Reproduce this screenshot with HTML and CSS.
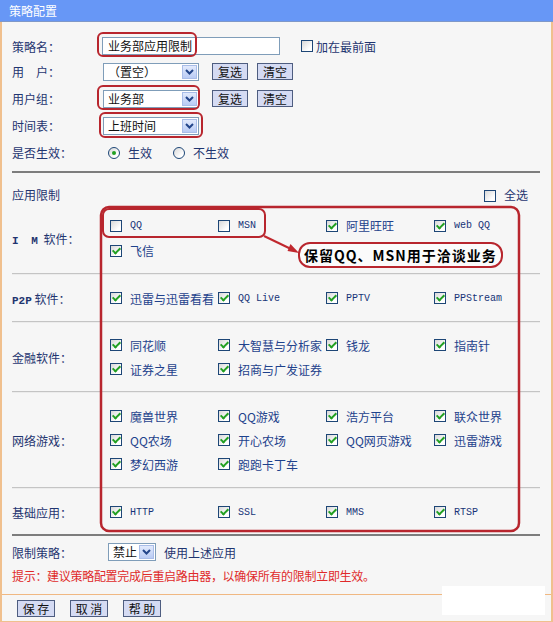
FILE: index.html
```html
<!DOCTYPE html>
<html lang="zh-CN">
<head>
<meta charset="utf-8">
<title>策略配置</title>
<link rel="stylesheet" href="styles.css">
</head>
<body>
<div class="page">
  <div class="titlebar">策略配置</div>
  <div class="panel">
    <div class="form">
      <div class="frow first">
        <span class="lbl">策略名：</span>
        <span class="tinput">业务部应用限制</span>
        <span class="cb front"></span><span class="ftxt">加在最前面</span>
      </div>
      <div class="frow">
        <span class="lbl">用　户：</span>
        <span class="sel"><span class="selv">（置空）</span><span class="arr"><svg width="9" height="6" viewBox="0 0 9 6"><path d="M1 1 L4.5 4.5 L8 1" fill="none" stroke="#23458a" stroke-width="2"/></svg></span></span>
        <span class="btn b1">复选</span><span class="btn b2">清空</span>
      </div>
      <div class="frow">
        <span class="lbl">用户组：</span>
        <span class="sel"><span class="selv">业务部</span><span class="arr"><svg width="9" height="6" viewBox="0 0 9 6"><path d="M1 1 L4.5 4.5 L8 1" fill="none" stroke="#23458a" stroke-width="2"/></svg></span></span>
        <span class="btn b1">复选</span><span class="btn b2">清空</span>
      </div>
      <div class="frow">
        <span class="lbl">时间表：</span>
        <span class="sel"><span class="selv">上班时间</span><span class="arr"><svg width="9" height="6" viewBox="0 0 9 6"><path d="M1 1 L4.5 4.5 L8 1" fill="none" stroke="#23458a" stroke-width="2"/></svg></span></span>
      </div>
      <div class="frow">
        <span class="lbl">是否生效：</span>
        <span class="rb on r1"></span><span class="rtxt">生效</span>
        <span class="rb r2"></span><span class="rtxt">不生效</span>
      </div>
    </div>

    <div class="sep dark top"></div>

    <div class="apphead">
      <span class="lbl">应用限制</span>
      <span class="selall"><span class="cb"></span><span class="satxt">全选</span></span>
    </div>

    <div class="sec im">
      <span class="slbl"><span class="lat wide">I M</span> 软件：</span>
      <div class="items">
        <span class="it"><span class="cb"></span><span class="lat">QQ</span></span>
        <span class="it"><span class="cb"></span><span class="lat">MSN</span></span>
        <span class="it"><span class="cb on"></span>阿里旺旺</span>
        <span class="it"><span class="cb on"></span><span class="lat">web QQ</span></span>
        <span class="it"><span class="cb on"></span>飞信</span>
      </div>
    </div>
    <div class="sep light"></div>

    <div class="sec p2p">
      <span class="slbl"><span class="lat">P2P</span> 软件：</span>
      <div class="items">
        <span class="it"><span class="cb on"></span>迅雷与迅雷看看</span>
        <span class="it"><span class="cb on"></span><span class="lat">QQ Live</span></span>
        <span class="it"><span class="cb on"></span><span class="lat">PPTV</span></span>
        <span class="it"><span class="cb on"></span><span class="lat">PPStream</span></span>
      </div>
    </div>
    <div class="sep light"></div>

    <div class="sec fin">
      <span class="slbl">金融软件：</span>
      <div class="items">
        <span class="it"><span class="cb on"></span>同花顺</span>
        <span class="it"><span class="cb on"></span>大智慧与分析家</span>
        <span class="it"><span class="cb on"></span>钱龙</span>
        <span class="it"><span class="cb on"></span>指南针</span>
        <span class="it"><span class="cb on"></span>证券之星</span>
        <span class="it"><span class="cb on"></span>招商与广发证券</span>
      </div>
    </div>
    <div class="sep light"></div>

    <div class="sec game">
      <span class="slbl">网络游戏：</span>
      <div class="items">
        <span class="it"><span class="cb on"></span>魔兽世界</span>
        <span class="it"><span class="cb on"></span>QQ游戏</span>
        <span class="it"><span class="cb on"></span>浩方平台</span>
        <span class="it"><span class="cb on"></span>联众世界</span>
        <span class="it"><span class="cb on"></span>QQ农场</span>
        <span class="it"><span class="cb on"></span>开心农场</span>
        <span class="it"><span class="cb on"></span>QQ网页游戏</span>
        <span class="it"><span class="cb on"></span>迅雷游戏</span>
        <span class="it"><span class="cb on"></span>梦幻西游</span>
        <span class="it"><span class="cb on"></span>跑跑卡丁车</span>
      </div>
    </div>
    <div class="sep light"></div>

    <div class="sec basic">
      <span class="slbl">基础应用：</span>
      <div class="items">
        <span class="it"><span class="cb on"></span><span class="lat">HTTP</span></span>
        <span class="it"><span class="cb on"></span><span class="lat">SSL</span></span>
        <span class="it"><span class="cb on"></span><span class="lat">MMS</span></span>
        <span class="it"><span class="cb on"></span><span class="lat">RTSP</span></span>
      </div>
    </div>
    <div class="sep dark"></div>

    <div class="limit">
      <span class="lbl">限制策略：</span>
      <span class="sel small"><span class="selv">禁止</span><span class="arr"><svg width="9" height="6" viewBox="0 0 9 6"><path d="M1 1 L4.5 4.5 L8 1" fill="none" stroke="#23458a" stroke-width="2"/></svg></span></span>
      <span class="ltxt">使用上述应用</span>
    </div>
    <div class="tip">提示：建议策略配置完成后重启路由器，以确保所有的限制立即生效。</div>

    <div class="footer">
      <span class="fbtn">保 存</span>
      <span class="fbtn">取 消</span>
      <span class="fbtn">帮 助</span>
    </div>
  </div>

  <svg class="marks" width="553" height="622" viewBox="0 0 553 622">
    <rect x="98" y="33" width="98" height="23" rx="5" fill="none" stroke="#b8262e" stroke-width="2"/>
    <rect x="98" y="86" width="101" height="23" rx="5" fill="none" stroke="#b8262e" stroke-width="2"/>
    <rect x="100" y="113" width="102" height="24" rx="5" fill="none" stroke="#b8262e" stroke-width="2"/>
    <rect x="103" y="209" width="162" height="28" rx="6" fill="none" stroke="#b8262e" stroke-width="2"/>
    <rect x="101" y="207" width="418" height="324" rx="8" fill="none" stroke="#b8262e" stroke-width="2.5"/>
    <line x1="264" y1="236" x2="291" y2="249" stroke="#c0282e" stroke-width="2"/>
    <polygon points="299,253 287.5,251 290.5,244" fill="#c0282e"/>
    <rect x="442" y="586" width="103" height="29" fill="#ffffff"/>
  </svg>
  <div class="callout">保留QQ、MSN用于洽谈业务</div>
</div>
</body>
</html>
```

FILE: styles.css
```css
* { box-sizing: border-box; }
body {
  margin: 0;
  background: #ffffff;
  font-family: "Noto Sans CJK SC", "Noto Sans", sans-serif;
  font-size: 12px;
}
.page {
  position: relative;
  width: 553px;
  height: 622px;
  overflow: hidden;
  background: #f6f6f6;
}
.titlebar {
  height: 22px;
  background: #6797f6;
  border-bottom: 1px solid #7f98c8;
  color: #ffffff;
  line-height: 21px;
  padding-left: 9px;
  font-size: 12px;
}
.panel {
  height: 600px;
  border-left: 2px solid #f0c08e;
  border-right: 2px solid #f0c08e;
  border-bottom: 1px solid #f0c08e;
  padding-left: 10px;
  display: flex;
  flex-direction: column;
}
.lbl { color: #1f3570; }
.form { padding-top: 12px; }
.frow {
  display: flex;
  align-items: center;
  height: 27px;
}
.frow.first { height: 24px; }
.frow .lbl { width: 90px; flex: none; }

.tinput {
  width: 178px;
  height: 18px;
  background: #ffffff;
  border: 1px solid #7f9db9;
  padding-left: 5px;
  line-height: 16px;
  color: #111;
}
.ftxt { color: #1f3570; margin-left: 3px; }
.cb {
  position: relative;
  display: inline-block;
  width: 12px;
  height: 12px;
  flex: none;
  border: 1px solid #1d4676;
  background: linear-gradient(135deg, #d8d8d8, #ffffff 75%);
}
.cb.front { margin-left: 21px; }
.cb.on::after {
  content: "";
  position: absolute;
  left: 3px;
  top: 0px;
  width: 3px;
  height: 6px;
  border: solid #22a022;
  border-width: 0 2px 2px 0;
  transform: rotate(45deg);
}

.sel {
  display: flex;
  align-items: center;
  justify-content: space-between;
  width: 96px;
  height: 18px;
  margin-left: 1px;
  background: #ffffff;
  border: 1px solid #7f9db9;
  padding: 0 1px 0 4px;
}
.selv { color: #111; line-height: 16px; }
.arr {
  width: 15px;
  height: 14px;
  display: flex;
  align-items: center;
  justify-content: center;
  background: linear-gradient(#e2eafc, #b9cbf4);
  border: 1px solid #a9bde8;
}
.sel.small { width: 48px; margin-left: 4px; }

.btn {
  width: 36px;
  height: 17px;
  background: #d5dbf3;
  border: 1px solid #4e5d80;
  color: #111;
  text-align: center;
  line-height: 15px;
}
.btn.b1 { margin-left: 13px; }
.btn.b2 { margin-left: 9px; }

.rb {
  position: relative;
  display: inline-block;
  width: 12px;
  height: 12px;
  border-radius: 50%;
  border: 1px solid #1d4676;
  background: linear-gradient(135deg, #d8d8d8, #ffffff 75%);
}
.rb.on::after {
  content: "";
  position: absolute;
  left: 3px;
  top: 3px;
  width: 4px;
  height: 4px;
  border-radius: 50%;
  background: #22a022;
}
.rb.r1 { margin-left: 6px; }
.rb.r2 { margin-left: 21px; }
.rtxt { color: #1f3570; margin-left: 8px; }

.sep { width: 528px; flex: none; }
.sep.dark { height: 2px; background: #7d7d7d; }
.sep.dark.top { margin-top: 5px; }
.sep.light { height: 2px; background: #c4c4c4; border-bottom: 1px solid #ececec; }

.apphead {
  height: 40px;
  width: 528px;
  padding-top: 14px;
  display: flex;
  justify-content: space-between;
  align-items: flex-start;
  line-height: 16px;
}
.selall { display: flex; align-items: center; padding-right: 12px; }
.selall .cb { margin-top: 1px; }
.satxt { color: #1f3570; margin-left: 8px; }

.sec {
  display: grid;
  grid-template-columns: 98px 432px;
  align-items: center;
}
.slbl { color: #1f3570; }
.items {
  display: grid;
  grid-template-columns: repeat(4, 108px);
  grid-auto-rows: 24px;
  align-items: center;
}
.it {
  display: flex;
  align-items: center;
  color: #1e428c;
  white-space: nowrap;
}
.it .cb { margin-right: 8px; }
.lat {
  font-family: "Liberation Mono", monospace;
  font-size: 10px;
  color: #163478;
}
.slbl .lat { color: #1f3570; font-size: 11px; font-weight: bold; }
.slbl .lat.wide { letter-spacing: 3px; }

.sec.im { padding: 0 0 10px; }
.sec.im .items { grid-auto-rows: 25px; }
.sec.p2p { padding: 11px 0; }
.sec.fin { padding: 10px 0; }
.sec.game { padding: 11px 0; }
.sec.basic { padding: 11px 0 10px; }

.limit {
  height: 32px;
  display: flex;
  align-items: center;
}
.limit .lbl { width: 92px; }
.ltxt { color: #1f3570; margin-left: 8px; }
.tip {
  height: 16px;
  line-height: 16px;
  color: #e02a2a;
  letter-spacing: -0.3px;
}
.footer {
  margin-top: 10px;
  margin-left: -10px;
  border-top: 1px solid #f0b882;
  padding: 5px 0 0 15px;
  display: flex;
  gap: 15px;
}
.fbtn {
  width: 38px;
  height: 17px;
  background: #d5dbf3;
  border: 1px solid #4e5d80;
  color: #111;
  text-align: center;
  line-height: 15px;
}

.marks {
  position: absolute;
  left: 0;
  top: 0;
  pointer-events: none;
}
.callout {
  position: absolute;
  left: 298px;
  top: 242px;
  width: 205px;
  height: 26px;
  border: 2px solid #b8262e;
  border-radius: 12px;
  background: #fbfbfb;
  color: #000;
  font-weight: bold;
  font-size: 14px;
  line-height: 22px;
  padding-left: 4px;
  letter-spacing: 1px;
  white-space: nowrap;
}
```
